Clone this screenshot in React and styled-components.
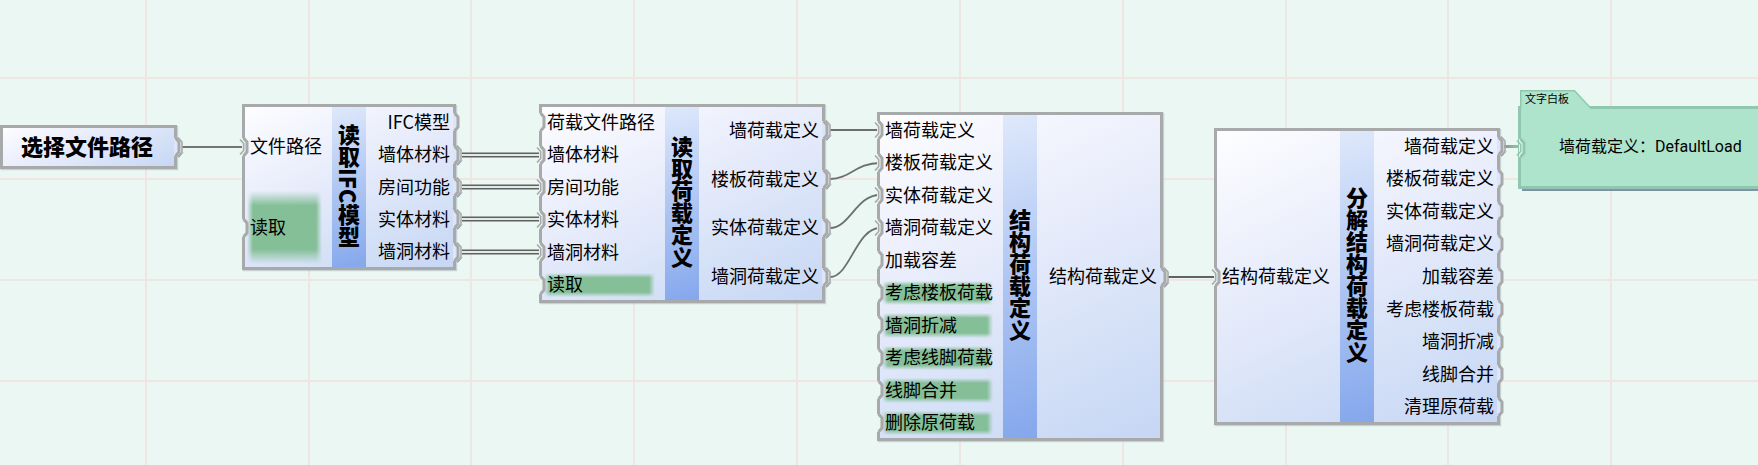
import React from "react";
import styled, { createGlobalStyle } from "styled-components";

const GlobalStyle = createGlobalStyle`
  html, body { margin: 0; background: #eaf7f3; }
  body {
    font-family: "Noto Sans CJK SC", "Noto Sans", sans-serif;
    color: #000;
  }
`;

const Canvas = styled.main`
  position: relative;
  min-height: 100vh;
  overflow: hidden;
  background: #eaf7f3;
`;

const Layer = styled.svg`
  position: absolute;
  inset: 0;
  width: 100%;
  height: 100%;
`;

const Node = styled.section`
  position: absolute;
  left: ${(p) => p.$x}px;
  top: ${(p) => p.$y}px;
  min-height: ${(p) => p.$h}px;
  display: flex;
  background: linear-gradient(155deg, #fefeff 0%, #f2f4fd 22%, #e3e9fa 50%, #d5e1f7 72%, #c6d6f4 100%);

  &::before {
    content: "";
    position: absolute;
    inset: -2px;
    border: 3px solid #a8a9aa;
    box-shadow: 1px 1px 1px rgba(90, 100, 120, 0.25);
    pointer-events: none;
  }
`;

const Column = styled.ul`
  list-style: none;
  margin: 0;
  padding: 0;
  display: flex;
  flex-direction: column;
`;

const Slot = styled.li`
  position: relative;
  flex: 1;
  display: flex;
  align-items: center;
  justify-content: ${(p) => (p.$side === "in" ? "flex-start" : "flex-end")};
  padding: ${(p) => (p.$side === "in" ? "0 10px 3px 6px" : "0 4px 3px 12px")};
  font-size: 18px;
  line-height: 24px;
  white-space: nowrap;
`;

const Highlight = styled.span`
  position: absolute;
  inset: 4px 10px 4px 3px;
  background: #84bf97;
  mask-image: linear-gradient(to right, transparent, #000 6px, #000 calc(100% - 6px), transparent),
    linear-gradient(to bottom, transparent, #000 20%, #000 80%, transparent);
  mask-composite: intersect;
`;

const SlotLabel = styled.span`
  position: relative;
`;

const Band = styled.h2`
  box-sizing: border-box;
  margin: 0;
  padding-bottom: 3px;
  width: 34px;
  display: flex;
  align-items: center;
  justify-content: center;
  writing-mode: vertical-rl;
  background: linear-gradient(165deg, #dfe9fb 0%, #b3c9f4 45%, #84a7ec 100%);
  font-size: 22px;
  line-height: 36px;
  font-weight: 900;
  white-space: nowrap;
`;

const PlainTitle = styled.h2`
  margin: 0;
  padding: 0 22px 4px 19px;
  align-self: center;
  font-size: 22px;
  line-height: 32px;
  font-weight: 900;
  white-space: nowrap;
`;

const PortMark = styled.svg`
  position: absolute;
  top: 50%;
  ${(p) => (p.$side === "in" ? "left" : "right")}: -11px;
  width: 21px;
  height: 28px;
  margin-top: -14px;
`;

const Board = styled.section`
  position: absolute;
  left: 1518px;
  right: -40px;
  top: 106px;
  min-width: 240px;
  box-sizing: border-box;
  border: 3px solid #8fc8ae;
  background: #aee4cc;
  box-shadow: 4px 2px 0 #7f92a6;
`;

const BoardText = styled.p`
  position: relative;
  margin: 0;
  padding: 24px 0 27px 38px;
  font-size: 16px;
  line-height: 24px;
  white-space: nowrap;
`;

const Value = styled.span`
  font-family: Roboto, "Noto Sans CJK SC", sans-serif;
`;

const BoardTab = styled.h2`
  position: absolute;
  left: -1px;
  bottom: 100%;
  margin: 0;
  padding: 0 26px 2px 5px;
  font-size: 11px;
  line-height: 17px;
  font-weight: 400;
  white-space: nowrap;
`;

const TabShape = styled.svg`
  position: absolute;
  left: 0;
  top: 0;
`;

const TabLabel = styled.span`
  position: relative;
`;

const GREY = "#a8a9aa";

function Port({ side, wired, stroke = GREY, outer = "#eaf7f3", inner = "#dde6f9" }) {
  const notch = "0,-9 3.5,-5 3.5,5 0,9";
  return (
    <PortMark $side={side} viewBox="-10.5 -14 21 28" aria-hidden="true">
      <polygon points={`-1.5,-9 ${notch} -1.5,9`} fill={side === "in" ? outer : inner} />
      <polyline points={notch} fill="none" stroke={stroke} strokeWidth="3" />
      {wired && side === "in" && (
        <polyline points="-3.5,-7.5 0.2,-3.5 0.2,3.5 -3.5,7.5" fill="none" stroke={stroke} strokeWidth="1.6" />
      )}
      {wired && side === "out" && (
        <>
          <polyline points="2.5,-9.5 6.5,-5 6.5,5 2.5,10" fill="none" stroke={stroke} strokeWidth="1.6" />
          <polyline points="3.2,10.5 7.6,5.5" fill="none" stroke="#8796a8" strokeWidth="0.8" />
        </>
      )}
    </PortMark>
  );
}

function Slots({ side, items }) {
  return (
    <Column>
      {items.map(({ label, wired, lit }) => (
        <Slot key={label} $side={side}>
          {lit && <Highlight />}
          <SlotLabel>{label}</SlotLabel>
          <Port side={side} wired={wired} />
        </Slot>
      ))}
    </Column>
  );
}

const wired = (label) => ({ label, wired: true });
const open = (label) => ({ label });
const lit = (label) => ({ label, lit: true });

const NODES = [
  {
    title: "读取IFC模型", x: 244, y: 106, h: 162,
    inputs: [wired("文件路径"), lit("读取")],
    outputs: [open("IFC模型"), wired("墙体材料"), wired("房间功能"), wired("实体材料"), wired("墙洞材料")],
  },
  {
    title: "读取荷载定义", x: 541, y: 106, h: 195,
    inputs: [open("荷载文件路径"), wired("墙体材料"), wired("房间功能"), wired("实体材料"), wired("墙洞材料"), lit("读取")],
    outputs: [wired("墙荷载定义"), wired("楼板荷载定义"), wired("实体荷载定义"), wired("墙洞荷载定义")],
  },
  {
    title: "结构荷载定义", x: 879, y: 114, h: 325,
    inputs: [
      wired("墙荷载定义"), wired("楼板荷载定义"), wired("实体荷载定义"), wired("墙洞荷载定义"), open("加载容差"),
      lit("考虑楼板荷载"), lit("墙洞折减"), lit("考虑线脚荷载"), lit("线脚合并"), lit("删除原荷载"),
    ],
    outputs: [wired("结构荷载定义")],
  },
  {
    title: "分解结构荷载定义", x: 1216, y: 130, h: 293,
    inputs: [wired("结构荷载定义")],
    outputs: [
      wired("墙荷载定义"), open("楼板荷载定义"), open("实体荷载定义"), open("墙洞荷载定义"), open("加载容差"),
      open("考虑楼板荷载"), open("墙洞折减"), open("线脚合并"), open("清理原荷载"),
    ],
  },
];

const GRID_X = [145, 308, 470, 633, 796, 959, 1122, 1285, 1447, 1610];
const GRID_Y = [77, 178, 279, 380];

const LIST_WIRES = [155, 187, 219, 252];
const CURVES = [
  [130, 130],
  [179, 163],
  [228, 195],
  [277, 228],
];

function Wires() {
  return (
    <Layer aria-hidden="true">
      <defs>
        <linearGradient id="toBoard" gradientUnits="userSpaceOnUse" x1="1504" y1="0" x2="1520" y2="0">
          <stop offset="0" stopColor="#8e9693" />
          <stop offset="1" stopColor="#8fc8ae" />
        </linearGradient>
      </defs>
      {GRID_X.map((x) => (
        <rect key={x} x={x} y="0" width="2" height="100%" fill="#efe5e2" />
      ))}
      {GRID_Y.map((y) => (
        <rect key={y} x="0" y={y} width="100%" height="2" fill="#efe5e2" />
      ))}
      <path d="M182 147H244" stroke="#727573" strokeWidth="2" />
      {LIST_WIRES.map((y) => (
        <g key={y}>
          <path d={`M462 ${y}H542`} stroke="#5f6260" strokeWidth="5" />
          <path d={`M462 ${y}H542`} stroke="#e4eae8" strokeWidth="2" />
        </g>
      ))}
      {CURVES.map(([a, b]) => (
        <path key={a} d={`M830 ${a}C850 ${a} 856 ${b} 880 ${b}`} fill="none" stroke="#6d706e" strokeWidth="1.8" />
      ))}
      <path d="M1168 277H1216" stroke="#606361" strokeWidth="2" />
      <rect x="1504" y="145" width="16" height="3" fill="url(#toBoard)" />
    </Layer>
  );
}

export default function App() {
  return (
    <>
      <GlobalStyle />
      <Canvas>
        <Wires />
        <Node $x={2} $y={127} $h={40}>
          <PlainTitle>选择文件路径</PlainTitle>
          <Port side="out" wired />
        </Node>
        {NODES.map((n) => (
          <Node key={n.title} $x={n.x} $y={n.y} $h={n.h}>
            <Slots side="in" items={n.inputs} />
            <Band>{n.title}</Band>
            <Slots side="out" items={n.outputs} />
          </Node>
        ))}
        <Board>
          <BoardTab>
            <TabShape width="72" height="19" viewBox="0 0 72 19" aria-hidden="true">
              <path d="M0.7 19V0.7H54.5L71.5 19" fill="#aee4cc" stroke="#8fc8ae" strokeWidth="1.4" />
            </TabShape>
            <TabLabel>文字白板</TabLabel>
          </BoardTab>
          <BoardText>墙荷载定义：<Value>DefaultLoad</Value></BoardText>
          <Port side="in" wired stroke="#8fc8ae" />
        </Board>
      </Canvas>
    </>
  );
}
